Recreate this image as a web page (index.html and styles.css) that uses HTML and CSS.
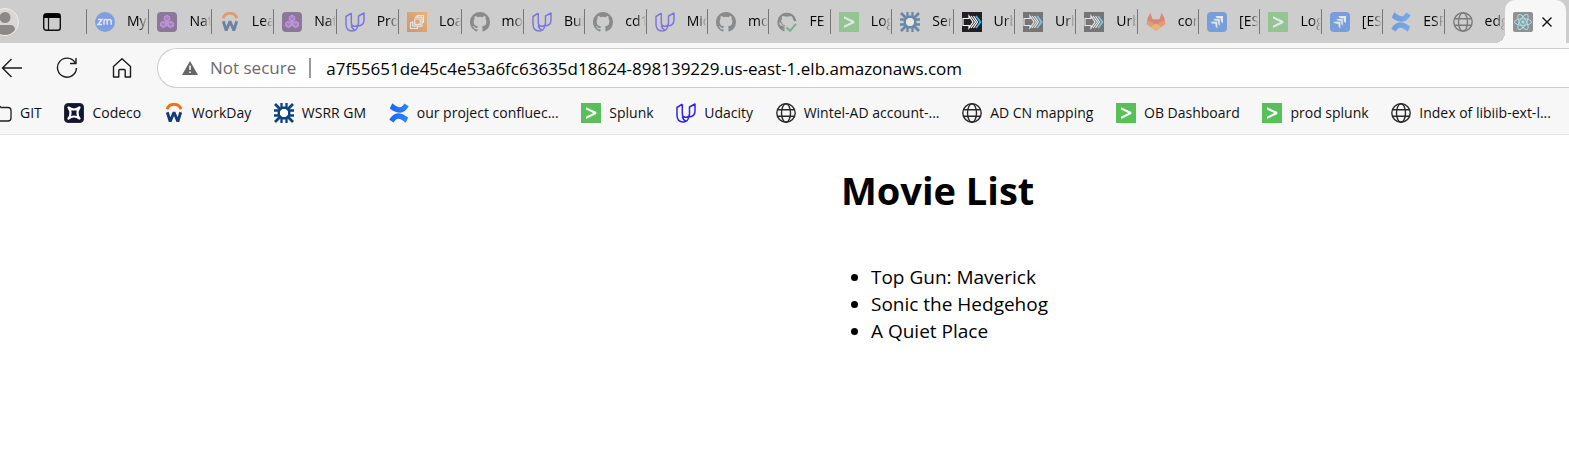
FILE: index.html
```html
<!DOCTYPE html>
<html lang="en">
<head>
<meta charset="utf-8">
<title>Movie List</title>
<link rel="stylesheet" href="styles.css">
</head>
<body>
<svg class="sprite" aria-hidden="true">
  <defs>
    <linearGradient id="g-orange" x1="0" y1="1" x2="1" y2="0"><stop offset="0" stop-color="#d45b07"/><stop offset="1" stop-color="#ff9e2c"/></linearGradient>
    <linearGradient id="g-blue" x1="0" y1="0" x2="1" y2="0"><stop offset="0" stop-color="#1868f0"/><stop offset="1" stop-color="#2a86ff"/></linearGradient>
  </defs>
  <symbol id="zoom" viewBox="0 0 20 20"><circle cx="10" cy="10" r="10" fill="#2f73f6"/><path d="M3 7.5h4l-4 5h4M9 12.8V9.2q0-1.7 1.6-1.7t1.6 1.7v3.6M12.2 9.5q0-2 2-2t2 2v3.3" fill="none" stroke="#fff" stroke-width="1.5"/></symbol>
  <symbol id="natwest" viewBox="0 0 20 20"><rect width="20" height="20" rx="4" fill="#4b2366"/><path d="M10 3.2l2.700 1.500v3L10 9.200 7.300 7.700v-3zM6.300 9.200l3 1.600v3.200L6.500 15.700 3.600 14v-3.200zM13.700 9.200l2.800 1.600V14l-2.900 1.700-2.900-1.700v-3.200zM10 8l3 4H7z" fill="#a349df" stroke="#b565e8"/><path d="M8.500 5.500l1.500 2 1.600-2M5 11.600l2 1.300 1-2M12 11l1 2 2-1" fill="none" stroke="#642488"/></symbol>
  <symbol id="workday" viewBox="0 0 20 20"><path d="M3 6.300a7.400 7.400 0 0 1 14 0" fill="none" stroke="#f96a12" stroke-width="2.800"/><path d="M3.300 9.200l2.900 9.300 3.800-9.300 3.800 9.300 2.900-9.300" fill="none" stroke="#153a78" stroke-width="2.900" stroke-linejoin="bevel"/></symbol>
  <symbol id="udacity" viewBox="0 0 20 20"><path d="M6.300 1.200L1 4.500V12q0 7 6.300 7 4.800 0 5.300-5M6.300 1.200V10.500q0 3.700 3.300 3.700M12.600 14.100q6.400-.3 6.400-6V1l-5.500 3v7q0 3.200-3 3.200-1.500 0-2.500-.7M6.300 13.500q.8 3.700 3.800 4.600" fill="none" stroke="#3022ec" stroke-width="1.500" stroke-linejoin="round"/></symbol>
  <symbol id="ec2" viewBox="0 0 20 20"><rect width="20" height="20" fill="url(#g-orange)"/><g fill="none" stroke="#fff" stroke-width="1.200" stroke-linejoin="round"><rect x="7.800" y="7" width="5.400" height="5.400"/><path d="M5.800 10.500H3.500v6h7v-2.300M10 5.200V3.500h6.500v7h-1.400M5.800 14.200h7.500M5.800 14.200V9M15 5.200v9h-4M8 5.200h7"/></g></symbol>
  <symbol id="github" viewBox="0 0 16 16"><path fill="#45494d" d="M8 0C3.580 0 0 3.580 0 8c0 3.540 2.290 6.530 5.470 7.590.4.070.55-.17.55-.38 0-.19-.01-.82-.01-1.490-2.010.37-2.530-.49-2.690-.94-.09-.23-.48-.94-.82-1.130-.28-.15-.68-.52-.01-.53.63-.01 1.080.58 1.230.82.72 1.210 1.870.87 2.330.66.070-.52.280-.87.510-1.070-1.780-.2-3.640-.89-3.640-3.950 0-.87.310-1.590.82-2.150-.08-.2-.36-1.020.08-2.120 0 0 .67-.21 2.200.82a7.600 7.600 0 0 1 4 0c1.530-1.040 2.200-.82 2.200-.82.440 1.100.160 1.920.080 2.120.510.560.820 1.270.820 2.150 0 3.070-1.870 3.750-3.650 3.950.290.250.540.730.540 1.480 0 1.070-.01 1.930-.01 2.200 0 .21.150.46.550.38A8 8 0 0 0 16 8c0-4.420-3.580-8-8-8z"/></symbol>
  <symbol id="github-ok" viewBox="0 0 20 20"><path d="M7.500 18.500Q1.300 16 1.300 10A8.600 8.600 0 0 1 18.400 9M7.500 15.500q-2.600.5-3.600-1.800" fill="none" stroke="#45494d" stroke-width="2"/><path d="M5 7L4.500 3.500 8 4.500h4l3.500-1 .5 4 1.500 2 1-1q-.5-7-8.500-7.500Q2.500 1.300 1 9l3 2q-.3-2.500 1-4z" fill="#45494d"/><path d="M4.300 10q.2 3.500 3.700 4" fill="none" stroke="#45494d"/><path d="M9.500 15.500l3.500 3.300 6-7" fill="none" stroke="#239349" stroke-width="1.900"/></symbol>
  <symbol id="splunk" viewBox="0 0 20 20"><path d="M0 0h20v20H0z" fill="#59bf59"/><path d="M5 4.200l10.300 4.900v1.900L5 16v-2.300L12.300 10.100 5 6.500z" fill="#fff"/></symbol>
  <symbol id="rbs" viewBox="0 0 20 20"><g fill="none" stroke="#0b4383"><path d="M1 1l5.500 5.500M19 1l-5.500 5.500M1 19l5.500-5.500M19 19l-5.500-5.500" stroke-width="2.800"/><path d="M7.500 0v5.500L5.500 7.500H0M12.500 0v5.500l2 2H20M7.500 20v-5.500l-2-2H0M12.500 20v-5.500l2-2H20" stroke-width="2.300"/><path d="M8 4.800h4L15.200 8v4L12 15.200H8L4.800 12V8z" stroke-width="2.400"/></g><circle cx="10" cy="10" r="4" fill="#fff"/></symbol>
  <symbol id="urban" viewBox="0 0 20 20"><path d="M0 0h20v20H0z" fill="#211f21"/><g fill="none" stroke-width="1.200"><path d="M1 6.500v7h6V16l4-6-4-6v2.500z" stroke="#fff"/><path d="M9 4l4.500 6L9 16" stroke="#fff"/><path d="M11.500 4l4 6-4 6" stroke="#fff"/><path d="M14 4l4.500 6L14 16" stroke="#37b9ef" stroke-width="1.800"/></g></symbol>
  <symbol id="gitlab" viewBox="0 0 20 20"><path d="M10 19L.3 12 2 5.500 4.200 1l2.400 6.500h6.800L15.800 1 18 5.500l1.700 6.500z" fill="#fc6d26"/><path d="M4.200 1l2.400 6.500h6.800L15.800 1 18 5.500l.8 3-5.300 2L10 14l-3.500-3.500-5.300-2L2 5.500z" fill="#e24329"/><path d="M10 19l-5-4 5-3.500 5 3.500z" fill="#fca326"/></symbol>
  <symbol id="jira" viewBox="0 0 20 20"><rect width="20" height="20" rx="4" fill="#2070e8"/><g fill="#fff"><path d="M8.600 4H16v7.300q-2-.5-2.300-3V6.500H12Q9 6.500 8.600 4z"/><path d="M6.200 6.700h6.900V14q-2-.5-2.300-3V9.200H9.500q-3 0-3.300-2.500z" stroke="#2070e8" stroke-width=".5"/><path d="M3.500 9.400h7.100v7.200q-2-.5-2.400-3v-1.700H6.800q-3 0-3.300-2.500z" stroke="#2070e8" stroke-width=".5"/></g></symbol>
  <symbol id="confluence" viewBox="0 0 20 20"><path d="M3.300.2L.8 5.500Q6.500 9.800 11 9.800q5 0 8.700-6.500L15.300.5Q13 4.500 10.500 4.200 8 4 3.300.2z" fill="url(#g-blue)"/><path d="M16.700 19.800l2.500-5.300Q13.500 10.200 9 10.200q-5 0-8.700 6.500l4.400 2.800Q7 15.500 9.500 15.800q2.500.2 7.200 4z" fill="url(#g-blue)"/></symbol>
  <symbol id="globe" viewBox="0 0 20 20"><g fill="none" stroke="#292929" stroke-width="1.400"><circle cx="10" cy="10" r="9.200"/><ellipse cx="10" cy="10" rx="4.500" ry="9.200"/><path d="M1.700 6.700h16.600M1.700 13.300h16.600"/></g></symbol>
  <symbol id="react" viewBox="0 0 20 20"><rect width="20" height="20" rx="2" fill="#919191"/><g fill="none" stroke="#a6e1ea"><ellipse cx="10" cy="10" rx="8.500" ry="3.300"/><ellipse cx="10" cy="10" rx="8.500" ry="3.300" transform="rotate(60 10 10)"/><ellipse cx="10" cy="10" rx="8.500" ry="3.300" transform="rotate(120 10 10)"/></g><circle cx="10" cy="10" r="1.700" fill="#a6e1ea"/></symbol>
  <symbol id="folder" viewBox="0 0 20 20"><path d="M0 2.500h7l2 2h7q3 0 3 3V15q0 3-3 3H0" fill="none" stroke="#222" stroke-width="1.300"/></symbol>
  <symbol id="codeco" viewBox="0 0 20 20"><rect x=".5" y=".5" width="19" height="19" rx="3.500" fill="#101535" stroke="#2d2d2d"/><path d="M4.500 4.500Q10 8.500 15.500 4.500 11.500 10 15.500 15.500 10 11.500 4.500 15.500 8.500 10 4.500 4.500z" fill="none" stroke="#fff" stroke-width="2.200" stroke-linejoin="round"/></symbol>
</svg>

<header class="browser">
  <div class="tab-bar">
    <button class="profile" aria-label="Profile"><svg viewBox="0 0 28 28"><circle cx="14" cy="14" r="13.500" fill="#d9d7d5" stroke="#eee"/><circle cx="14" cy="9.500" r="5.500" fill="#8b8886"/><path d="M4 22q0-5 5-5h10q5 0 5 5-4 5-10 5T4 22z" fill="#8b8886"/></svg></button>
    <button class="tab-menu" aria-label="Tab actions"><svg viewBox="0 0 18 18"><rect x=".7" y=".7" width="16.600" height="16.600" rx="2.500" fill="none" stroke="#111" stroke-width="1.400"/><path d="M1 1h16v4H1z"/><path d="M5.500 5v12" stroke="#111" stroke-width="1.200"/></svg></button>
    <nav class="tabs" aria-label="Open tabs">
      <button class="tab wide"><svg class="icon"><use href="#zoom"/></svg><span>My</span></button>
      <button class="tab wide"><svg class="icon"><use href="#natwest"/></svg><span>Nat</span></button>
      <button class="tab wide"><svg class="icon"><use href="#workday"/></svg><span>Lea</span></button>
      <button class="tab wide"><svg class="icon"><use href="#natwest"/></svg><span>Nat</span></button>
      <button class="tab wide"><svg class="icon"><use href="#udacity"/></svg><span>Pro</span></button>
      <button class="tab wide"><svg class="icon"><use href="#ec2"/></svg><span>Loa</span></button>
      <button class="tab wide"><svg class="icon"><use href="#github"/></svg><span>mo</span></button>
      <button class="tab"><svg class="icon"><use href="#udacity"/></svg><span>Bui</span></button>
      <button class="tab"><svg class="icon"><use href="#github"/></svg><span>cd1</span></button>
      <button class="tab"><svg class="icon"><use href="#udacity"/></svg><span>Mic</span></button>
      <button class="tab"><svg class="icon"><use href="#github"/></svg><span>mo</span></button>
      <button class="tab"><svg class="icon"><use href="#github-ok"/></svg><span>FE</span></button>
      <button class="tab"><svg class="icon"><use href="#splunk"/></svg><span>Log</span></button>
      <button class="tab"><svg class="icon"><use href="#rbs"/></svg><span>Ser</span></button>
      <button class="tab loaded"><svg class="icon"><use href="#urban"/></svg><span>Urb</span></button>
      <button class="tab"><svg class="icon"><use href="#urban"/></svg><span>Urb</span></button>
      <button class="tab"><svg class="icon"><use href="#urban"/></svg><span>Urb</span></button>
      <button class="tab"><svg class="icon"><use href="#gitlab"/></svg><span>con</span></button>
      <button class="tab"><svg class="icon"><use href="#jira"/></svg><span>[ES</span></button>
      <button class="tab"><svg class="icon"><use href="#splunk"/></svg><span>Log</span></button>
      <button class="tab"><svg class="icon"><use href="#jira"/></svg><span>[ES</span></button>
      <button class="tab"><svg class="icon"><use href="#confluence"/></svg><span>ESP</span></button>
      <button class="tab"><svg class="icon"><use href="#globe"/></svg><span>edg</span></button>
    </nav>
    <div class="active-tab">
      <svg class="icon"><use href="#react"/></svg>
      <button class="close" aria-label="Close tab"><svg viewBox="0 0 10 10"><path d="M.5.500l9 9M9.500.500l-9 9" stroke="#111" stroke-width="1.400"/></svg></button>
    </div>
  </div>

  <div class="toolbar">
    <div class="nav-buttons">
      <button aria-label="Back"><svg viewBox="0 0 22 22"><path d="M21 11H2M10.500 2L1.500 11l9 9"/></svg></button>
      <button aria-label="Refresh"><svg viewBox="0 0 22 22"><path d="M19 5.500A9.500 9.500 0 1 0 20.500 11M20 1v5.500h-6"/></svg></button>
      <button aria-label="Home"><svg viewBox="0 0 22 22"><path d="M2.500 9.500L11 1.800l8.500 7.700V20h-5.300v-6.500q0-1-1-1H8.800q-1 0-1 1V20H2.500z" stroke-linejoin="round"/></svg></button>
    </div>
    <div class="address">
      <svg class="warning" viewBox="0 0 16 14"><path d="M8 0l8 14H0z" fill="#666"/><path d="M7.300 4.500h1.500V9H7.300zM7.300 10.500h1.500V12H7.300z" fill="#fff"/></svg>
      <label for="url">Not secure</label>
      <input id="url" type="text" value="a7f55651de45c4e53a6fc63635d18624-898139229.us-east-1.elb.amazonaws.com">
    </div>
  </div>

  <nav class="bookmarks" aria-label="Bookmarks">
    <a href="#"><svg class="icon"><use href="#folder"/></svg>GIT</a>
    <a href="#"><svg class="icon"><use href="#codeco"/></svg>Codeco</a>
    <a href="#"><svg class="icon"><use href="#workday"/></svg>WorkDay</a>
    <a href="#"><svg class="icon"><use href="#rbs"/></svg>WSRR GM</a>
    <a href="#"><svg class="icon"><use href="#confluence"/></svg>our project confluec...</a>
    <a href="#"><svg class="icon"><use href="#splunk"/></svg>Splunk</a>
    <a href="#"><svg class="icon"><use href="#udacity"/></svg>Udacity</a>
    <a href="#"><svg class="icon"><use href="#globe"/></svg>Wintel-AD account-...</a>
    <a href="#"><svg class="icon"><use href="#globe"/></svg>AD CN mapping</a>
    <a href="#"><svg class="icon"><use href="#splunk"/></svg>OB Dashboard</a>
    <a href="#"><svg class="icon"><use href="#splunk"/></svg>prod splunk</a>
    <a href="#"><svg class="icon"><use href="#globe"/></svg>Index of libiib-ext-l...</a>
  </nav>
</header>

<main class="page">
  <h1>Movie List</h1>
  <ul>
    <li>Top Gun: Maverick</li>
    <li>Sonic the Hedgehog</li>
    <li>A Quiet Place</li>
  </ul>
</main>
</body>
</html>
```

FILE: styles.css
```css
* {
  box-sizing: border-box;
}

body {
  margin: 0;
  overflow-x: hidden;
  background: #fff;
  color: #000;
  font-family: "Segoe UI", "Open Sans", "Noto Sans", sans-serif;
}

button {
  display: flex;
  align-items: center;
  padding: 0;
  border: 0;
  background: none;
  color: inherit;
  font: inherit;
}

.sprite {
  position: absolute;
  width: 0;
  height: 0;
}

.icon {
  flex: none;
  width: 20px;
  height: 20px;
}

.browser {
  overflow: hidden;
  border-bottom: 1px solid #e5e5e5;
  background: #f7f7f7;
}

.tab-bar {
  display: flex;
  height: 43px;
  background: #cdcdcd;
}

.profile {
  margin-left: -9px;
}

.profile svg {
  width: 28px;
  height: 28px;
}

.tab-menu {
  margin: 0 25px 0 24px;
}

.tab-menu svg {
  width: 18px;
  height: 18px;
}

.tabs {
  display: flex;
  flex: 1;
  align-items: center;
  min-width: 0;
}

.tab {
  flex: 50 1 0;
  gap: 12px;
  min-width: 0;
  height: 25px;
  padding-left: 8px;
  border-left: 1px solid #777;
  font-size: 14px;
}

.tab.wide {
  flex-grow: 51;
}

.tab .icon {
  opacity: 0.5;
}

.tab.loaded .icon {
  opacity: 1;
}

.tab span {
  flex: 1;
  min-width: 0;
  overflow: hidden;
  line-height: 20px;
  padding-bottom: 2px;
  text-align: left;
  white-space: nowrap;
  mask-image: linear-gradient(to left, transparent, #000 10px);
}

.active-tab {
  position: relative;
  display: flex;
  align-items: center;
  gap: 9px;
  margin-right: 3px;
  padding: 0 14px 0 8px;
  border-radius: 10px 10px 0 0;
  background: #f7f7f7;
}

.active-tab::before {
  position: absolute;
  bottom: 0;
  left: -10px;
  width: 10px;
  height: 10px;
  background: radial-gradient(circle at 0 0, #cdcdcd 10px, #f7f7f7 10px);
  content: "";
}

.close svg {
  width: 10px;
  height: 10px;
}

.toolbar {
  display: flex;
  align-items: center;
  gap: 24px;
  padding: 5px 0 0 1px;
}

.nav-buttons {
  display: flex;
  gap: 33px;
}

.nav-buttons svg {
  width: 22px;
  height: 22px;
  fill: none;
  stroke: #1b1b1b;
  stroke-width: 1.4;
}

.address {
  display: flex;
  flex: 1;
  align-items: center;
  height: 40px;
  padding-left: 24px;
  border: 1px solid #ccc;
  border-right: 0;
  border-radius: 20px 0 0 20px;
  background: #fff;
  font-size: 17px;
}

.warning {
  width: 16px;
  height: 14px;
  margin-right: 12px;
}

.address label {
  padding-right: 13px;
  border-right: 2px solid #999;
  color: #6b6b6b;
  line-height: 20px;
  white-space: nowrap;
}

.address input {
  flex: 1;
  min-width: 0;
  padding: 0 0 0 15px;
  border: 0;
  outline: 0;
  background: none;
  color: #000;
  font: inherit;
}

.bookmarks {
  display: flex;
  align-items: center;
  justify-content: space-between;
  height: 46px;
  margin-left: -8px;
  padding: 3px 18px 0 0;
  font-size: 14px;
}

.bookmarks a {
  display: flex;
  align-items: center;
  gap: 8px;
  color: #111;
  text-decoration: none;
  white-space: nowrap;
}

.page {
  padding-left: 53.6%;
}

h1 {
  margin: 28px 0 47px;
  font-size: 38px;
  line-height: 54px;
}

ul {
  margin: 0;
  padding-left: 30px;
  font-size: 19px;
  line-height: 27px;
}
```
